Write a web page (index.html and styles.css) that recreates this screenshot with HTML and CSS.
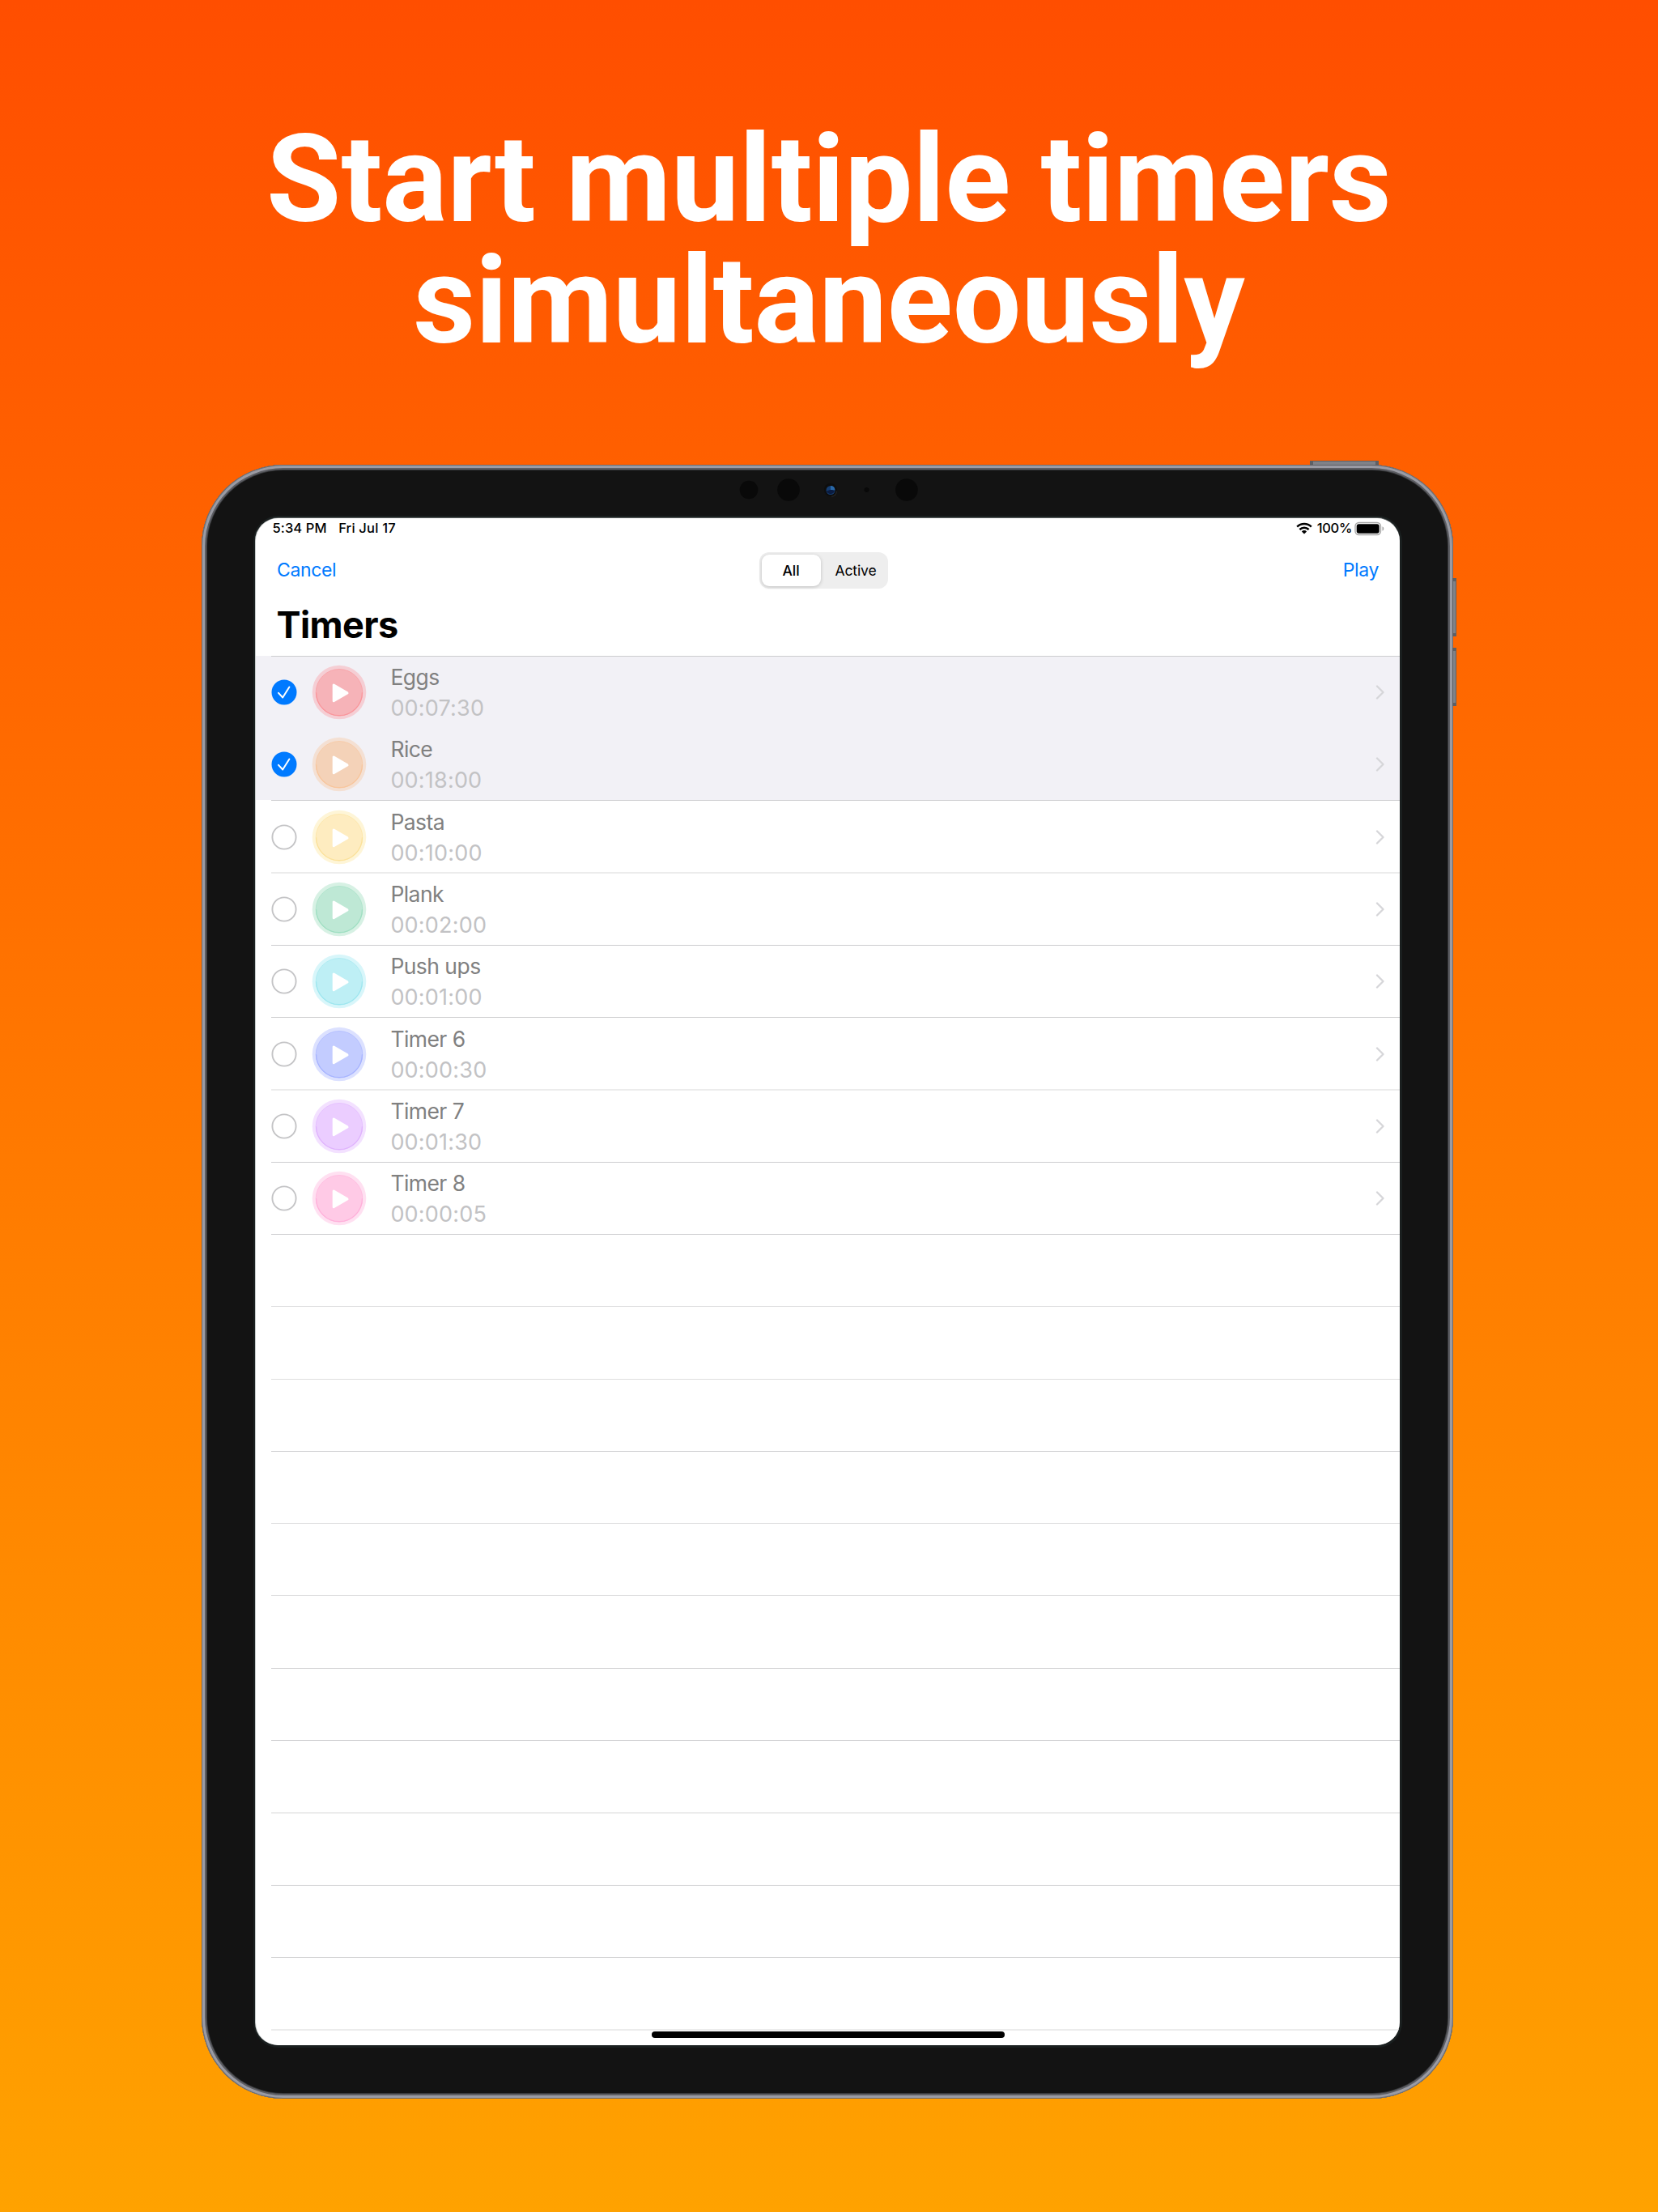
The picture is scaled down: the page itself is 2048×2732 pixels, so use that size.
FILE: index.html
```
<!DOCTYPE html>
<html lang="en">
<head>
<meta charset="utf-8">
<title>Timers</title>
<link rel="stylesheet" href="styles.css">
</head>
<body>
<svg class="defs" width="0" height="0">
  <symbol id="play" viewBox="0 0 68 68"><circle class="halo" cx="34" cy="34" r="33.3"/><circle class="disc" cx="34" cy="34.3" r="28.8"/><path class="edge" d="M5.600 34.300a28.400 28.400 0 0 0 56.800 0"/><path class="tri" d="M27.200 25.100v19.700L44 34.900z"/></symbol>
  <symbol id="on" viewBox="0 0 32 32"><circle cx="16" cy="16" r="15.500" fill="#007aff"/><path d="M9 16.800l5.200 5.700 8.200-13" fill="none" stroke="#fff" stroke-width="2" stroke-linecap="round" stroke-linejoin="round"/></symbol>
  <symbol id="off" viewBox="0 0 32 32"><circle cx="16" cy="16" r="14.600" fill="none" stroke="#c4c4c6" stroke-width="1.900"/></symbol>
  <symbol id="chev" viewBox="0 0 12 18"><path d="M2 1.500l7.500 7.500L2 16.500" fill="none" stroke="currentColor" stroke-width="2.300" stroke-linecap="round" stroke-linejoin="round"/></symbol>
</svg>
<main class="poster">
  <h1 class="headline">Start multiple timers<br>simultaneously</h1>
  <div class="device">
    <span class="button power"></span><span class="button vol-up"></span><span class="button vol-down"></span>
    <div class="bezel">
      <svg class="cameras" width="240" height="34" viewBox="0 0 240 34"><g fill="#090909"><circle cx="16" cy="17" r="11.300"/><circle cx="65" cy="17" r="13.800"/><circle cx="161.500" cy="17" r="3"/><circle cx="210.900" cy="17" r="13.800"/></g><circle cx="117" cy="17" r="8" fill="#0e0e0e"/><circle cx="117" cy="17.500" r="5.500" fill="#153d70"/><path d="M111.800 18.500a5.500 5.500 0 0 0 10.200 0l-4-2z" fill="#0a1b40"/><path d="M117 17v-5a5.500 5.500 0 0 1 5.300 5z" fill="#2968a8"/><path d="M118 25.500q6-1 6.500-7" fill="none" stroke="#222" stroke-width="1.500"/></svg>
      <div class="screen">
        <header class="status"><span>5:34 PM</span><span class="date">Fri Jul 17</span>
          <svg class="wifi" width="20" height="15" viewBox="0 0 20 15"><g fill="none" stroke="#000" stroke-width="2.500"><path d="M1.200 5.700a12.500 12.500 0 0 1 17.600 0"/><path d="M4.400 9a8 8 0 0 1 11.200 0"/></g><path d="M10 14.500L6.900 11.400a4.400 4.400 0 0 1 6.200 0z"/></svg>
          <span class="pct">100%</span>
          <svg class="battery" width="37" height="18" viewBox="0 0 37 18"><rect x="1" y="1.500" width="31.500" height="15" rx="4.500" fill="none" stroke="#a6a6a6" stroke-width="1.400"/><rect x="2.700" y="3.300" width="28" height="11.400" rx="2.700"/><path d="M34.500 6.200q1.800.8 1.800 2.800t-1.800 2.800z" fill="#a6a6a6"/></svg>
        </header>
        <nav class="nav"><a>Cancel</a><div class="segments"><span class="seg active">All</span><span class="seg">Active</span></div><a class="right">Play</a></nav>
        <h2 class="title">Timers</h2>
        <ul class="list">
          <li class="row selected red"><svg class="check"><use href="#on"/></svg><svg class="play"><use href="#play"/></svg><div class="text"><b>Eggs</b><i>00:07:30</i></div><svg class="chev"><use href="#chev"/></svg></li>
          <li class="row selected orange joined"><svg class="check"><use href="#on"/></svg><svg class="play"><use href="#play"/></svg><div class="text"><b>Rice</b><i>00:18:00</i></div><svg class="chev"><use href="#chev"/></svg></li>
          <li class="row yellow"><svg class="check"><use href="#off"/></svg><svg class="play"><use href="#play"/></svg><div class="text"><b>Pasta</b><i>00:10:00</i></div><svg class="chev"><use href="#chev"/></svg></li>
          <li class="row green soft"><svg class="check"><use href="#off"/></svg><svg class="play"><use href="#play"/></svg><div class="text"><b>Plank</b><i>00:02:00</i></div><svg class="chev"><use href="#chev"/></svg></li>
          <li class="row cyan"><svg class="check"><use href="#off"/></svg><svg class="play"><use href="#play"/></svg><div class="text"><b>Push ups</b><i>00:01:00</i></div><svg class="chev"><use href="#chev"/></svg></li>
          <li class="row blue"><svg class="check"><use href="#off"/></svg><svg class="play"><use href="#play"/></svg><div class="text"><b>Timer 6</b><i>00:00:30</i></div><svg class="chev"><use href="#chev"/></svg></li>
          <li class="row purple soft"><svg class="check"><use href="#off"/></svg><svg class="play"><use href="#play"/></svg><div class="text"><b>Timer 7</b><i>00:01:30</i></div><svg class="chev"><use href="#chev"/></svg></li>
          <li class="row pink"><svg class="check"><use href="#off"/></svg><svg class="play"><use href="#play"/></svg><div class="text"><b>Timer 8</b><i>00:00:05</i></div><svg class="chev"><use href="#chev"/></svg></li>
          <li class="row"></li><li class="row light"></li><li class="row light"></li><li class="row"></li><li class="row light"></li><li class="row light"></li><li class="row"></li><li class="row"></li><li class="row soft"></li><li class="row"></li><li class="row"></li><li class="row soft"></li>
        </ul>
        <div class="home"></div>
      </div>
    </div>
  </div>
</main>
</body>
</html>
```
FILE: styles.css
```
* { box-sizing: border-box; }
body { margin: 0; }
.defs { position: absolute; }
.poster {
  width: 2048px; height: 2732px; overflow: hidden; padding-top: 147px;
  background: linear-gradient(#ff4e00, #ffa200);
}
.headline {
  margin: 0; height: 427px; text-align: center; color: #fff;
  font: 700 150px/150px Roboto, sans-serif;
}
.device {
  position: relative; width: 1546px; height: 2018px; margin-left: 249px; padding: 7px;
  border-radius: 101px; background: #66676b;
  box-shadow: inset 0 0 0 1px #6b6b70, inset 0 0 0 4px #9a9ba4, inset 0 0 0 6px #5c5d62, inset 0 0 0 8px #38393c;
}
.bezel {
  width: 1532px; height: 2004px; border-radius: 94px; background: #131313;
  padding: 7px 59px 0 60px; box-shadow: 0 0 1px #222;
}
.cameras { display: block; margin-left: 593.400px; }
.button { position: absolute; background: #808288; border: 1px solid #5e6065; }
.power { left: 1368.500px; top: -5px; width: 85px; height: 6px; border-width: 1px 4px; }
.vol-up, .vol-down { right: -3.500px; width: 5px; height: 72px; border-width: 4px 1px; }
.vol-up { top: 140px; }
.vol-down { top: 226px; }
.screen {
  position: relative; margin-top: 18px; width: 1413px; height: 1886px; overflow: hidden;
  border-radius: 28px; background: #fff; color: #000;
  box-shadow: -1px 0 0 #c9cdcd, 0 -1px 0 #5c6060, 0 0 0 3px #1a1f1f;
  font-family: Inter, sans-serif; font-feature-settings: "calt" 0;
}
.status { display: flex; align-items: center; height: 25px; padding: 0 19px 0 20.500px; font-size: 16.500px; line-height: 24px; font-weight: 500; letter-spacing: .1px; }
.status span { margin-top: -1px; }
.status .date { margin-left: 14.500px; letter-spacing: .2px; }
.wifi { margin-left: auto; }
.status .pct { margin: -1px 3px 0 6px; letter-spacing: -.3px; }
.nav { display: grid; grid-template-columns: 595.500px 159px 1fr; align-items: center; height: 78px; padding: 0 26px; font-size: 23px; letter-spacing: -.35px; }
.nav a { color: #007aff; }
.nav .right { text-align: right; }
.segments {
  display: grid; grid-template-columns: 73px 1fr; height: 45px; padding: 3px; border-radius: 12px;
  background: #eee; font-size: 17.500px; line-height: 39px; letter-spacing: -.1px; text-align: center;
}
.seg { padding-left: 7px; }
.seg.active { padding: 0; background: #fff; border-radius: 9px; font-weight: 500; box-shadow: 0 1px 4px #0003; }
.title { margin: 0; height: 66.550px; padding-left: 25.500px; font-size: 45px; line-height: 57px; font-weight: 700; letter-spacing: -.6px; }
.list { list-style: none; margin: 0; padding: 0; }
.row {
  --line: #cdcdcf;
  display: flex; align-items: center; height: 89.300px; padding: 2px 18px 0 19.200px;
  background: linear-gradient(var(--line), var(--line)) 19px 0 / 100% 1px no-repeat;
}
.row.light { --line: #dededf; }
.row.soft { --line: #ececec; background-size: 100% 2px; }
.row.selected { background-color: #f2f1f6; }
.row.joined { --line: #f2f1f6; }
.check { width: 32px; height: 32px; }
.play { width: 68px; height: 68px; margin-left: 18px; }
.text { margin-left: 29.200px; padding-top: 2px; display: flex; flex-direction: column; }
.text b { font-weight: 400; font-size: 26.500px; line-height: 38px; letter-spacing: -.550px; color: #808080; }
.text i { font-style: normal; font-weight: 400; font-size: 27px; line-height: 40px; letter-spacing: .2px; color: #c2c2c4; }
.chev { width: 12px; height: 18px; margin-left: auto; color: #d6d6d9; }
.halo { fill: var(--halo); }
.disc { fill: var(--disc); stroke: var(--edge); stroke-width: .6px; }
.edge { fill: none; stroke: var(--edge); stroke-width: 1.200px; }
.tri { fill: #fff; stroke: #fff; stroke-width: 3px; stroke-linejoin: round; }
.selected .tri { fill: #f2f1f6; stroke: #f2f1f6; }
.red { --halo: #f5ced4; --disc: #f6b3b8; --edge: #fa959b; }
.orange { --halo: #f4e0d3; --disc: #f4d2b8; --edge: #f8c59b; }
.yellow { --halo: #fef5d7; --disc: #feecc0; --edge: #fbe19a; }
.green { --halo: #d7f1e4; --disc: #bee8d5; --edge: #9fdfc2; }
.cyan { --halo: #d8f6fa; --disc: #beeff5; --edge: #9de6ef; }
.blue { --halo: #dce1ff; --disc: #c3ccff; --edge: #a6b3ff; }
.purple { --halo: #f3e1ff; --disc: #ebcdff; --edge: #dfb3fd; }
.pink { --halo: #ffe0f1; --disc: #ffcae6; --edge: #ffb0da; }
.home { position: absolute; left: 488.500px; bottom: 9px; width: 436px; height: 8px; border-radius: 4px; background: #000; }
```
